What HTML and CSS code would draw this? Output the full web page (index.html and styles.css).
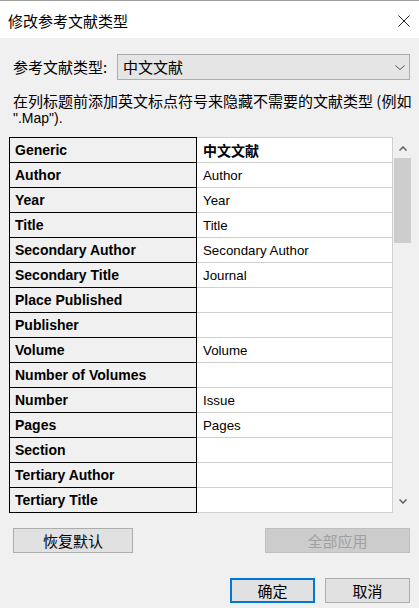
FILE: index.html
```html
<!DOCTYPE html>
<html lang="zh-CN">
<head>
<meta charset="utf-8">
<title>修改参考文献类型</title>
<link rel="stylesheet" href="styles.css">
</head>
<body>
<div class="window">
  <header class="titlebar">
    <span class="title">修改参考文献类型</span>
    <svg class="close" width="12" height="12" viewBox="0 0 12 12"><path d="M0.5 0.5L11.5 11.5M11.5 0.5L0.5 11.5" stroke="#222" stroke-width="1" fill="none"/></svg>
  </header>
  <main class="content">
    <div class="typerow">
      <span class="label">参考文献类型:</span>
      <div class="select">
        <span class="select-value">中文文献</span>
        <svg class="select-chev" width="10" height="5" viewBox="0 0 10 5"><path d="M0.5 0.5L5 4.5L9.5 0.5" stroke="#555" stroke-width="1" fill="none"/></svg>
      </div>
    </div>
    <div class="hint">
      <div class="hint-line">在列标题前添加英文标点符号来隐藏不需要的文献类型 (例如</div>
      <div class="hint-line latin">".Map").</div>
    </div>
    <div class="list">
      <div class="grid">
        <div class="k first">Generic</div><div class="v first bold">中文文献</div>
        <div class="k">Author</div><div class="v">Author</div>
        <div class="k">Year</div><div class="v">Year</div>
        <div class="k">Title</div><div class="v">Title</div>
        <div class="k">Secondary Author</div><div class="v">Secondary Author</div>
        <div class="k">Secondary Title</div><div class="v">Journal</div>
        <div class="k">Place Published</div><div class="v"></div>
        <div class="k">Publisher</div><div class="v"></div>
        <div class="k">Volume</div><div class="v">Volume</div>
        <div class="k">Number of Volumes</div><div class="v"></div>
        <div class="k">Number</div><div class="v">Issue</div>
        <div class="k">Pages</div><div class="v">Pages</div>
        <div class="k">Section</div><div class="v"></div>
        <div class="k">Tertiary Author</div><div class="v"></div>
        <div class="k">Tertiary Title</div><div class="v"></div>
      </div>
      <div class="scrollbar">
        <div class="sb-btn up"><svg width="8" height="5" viewBox="0 0 8 5"><path d="M0.5 4.5L4 1L7.5 4.5" stroke="#606060" stroke-width="1.5" fill="none"/></svg></div>
        <div class="thumb"></div>
        <div class="track"></div>
        <div class="sb-btn down"><svg width="8" height="5" viewBox="0 0 8 5"><path d="M0.5 0.5L4 4L7.5 0.5" stroke="#606060" stroke-width="1.5" fill="none"/></svg></div>
      </div>
    </div>
    <div class="actions-top">
      <button class="btn btn-reset">恢复默认</button>
      <button class="btn btn-apply" disabled>全部应用</button>
    </div>
    <div class="actions-bottom">
      <button class="btn btn-ok">确定</button>
      <button class="btn btn-cancel">取消</button>
    </div>
  </main>
</div>
</body>
</html>
```
FILE: styles.css
```css
* { box-sizing: border-box; }
html, body { margin: 0; padding: 0; }
body {
  width: 419px;
  height: 608px;
  background: #f0f0f0;
  font-family: "Noto Sans CJK SC", "Noto Sans", sans-serif;
  font-size: 15px;
  color: #000;
  overflow: hidden;
}
.window { width: 419px; height: 608px; }
.titlebar {
  height: 38px;
  background: #fff;
  border-top: 1px solid #a0a0a0;
  display: flex;
  align-items: center;
  justify-content: space-between;
  padding: 0 9px 0 8px;
}
.title { font-size: 15px; line-height: 20px; padding-top: 2px; }
.close { display: block; margin-top: 2px; }
.content { padding: 0 8px 0 9px; }
.typerow {
  margin-top: 16px;
  height: 26px;
  display: flex;
  align-items: center;
  padding-left: 4px;
}
.label { width: 104px; font-size: 15px; line-height: 20px; }
.select {
  width: 293px;
  height: 26px;
  background: #e5e5e5;
  border: 1px solid #adadad;
  display: flex;
  align-items: center;
  justify-content: space-between;
  padding: 0 4px 0 5px;
}
.select-value { font-size: 15px; line-height: 20px; }
.select-chev { display: block; }
.hint {
  margin-top: 12px;
  padding-left: 4px;
  white-space: nowrap;
}
.hint-line {
  font-size: 15px;
  line-height: 17px;
  height: 17px;
}
.hint-line.latin {
  font-family: "Liberation Sans", sans-serif;
  font-size: 14px;
  padding-top: 1px;
}
.list {
  margin-top: 11px;
  display: flex;
  height: 375px;
}
.grid {
  display: grid;
  grid-template-columns: 188px 196px;
  grid-template-rows: 26px;
  grid-auto-rows: 25px;
  font-family: "Liberation Sans", "Noto Sans CJK SC", sans-serif;
  font-size: 13.3px;
}
.grid > div {
  display: flex;
  align-items: center;
  white-space: nowrap;
  overflow: hidden;
  height: 25px;
}
.k {
  font-weight: bold;
  font-size: 14px;
  background: #f0f0f0;
  border-left: 1px solid #000;
  border-right: 1px solid #000;
  border-bottom: 1px solid #000;
  padding-left: 5px;
}
.v {
  background: #fff;
  border-right: 1px solid #d0d0d0;
  border-bottom: 1px solid #d0d0d0;
  padding-left: 6px;
}
.grid > .first { height: 26px; }
.k.first { border-top: 1px solid #000; }
.v.first { border-top: 1px solid #d0d0d0; }
.bold { font-weight: bold; font-size: 14px; }
.scrollbar {
  width: 18px;
  display: flex;
  flex-direction: column;
}
.sb-btn {
  display: flex;
  align-items: center;
  justify-content: center;
  padding-left: 2px;
}
.sb-btn svg { display: block; }
.sb-btn.up { height: 21px; padding-top: 1px; }
.sb-btn.down { height: 22px; }
.thumb {
  height: 85px;
  margin-left: 1px;
  width: 17px;
  background: #cdcdcd;
}
.track { flex: 1; }
.actions-top {
  margin-top: 16px;
  height: 25px;
  display: flex;
  justify-content: space-between;
  padding: 0 1px 0 4px;
}
.actions-bottom {
  margin-top: 25px;
  height: 25px;
  display: flex;
  justify-content: flex-end;
  gap: 10px;
  padding-right: 1px;
}
.btn {
  font-family: "Noto Sans CJK SC", sans-serif;
  font-size: 15px;
  line-height: 20px;
  height: 25px;
  padding: 0;
  margin: 0;
  background: #e1e1e1;
  border: 1px solid #adadad;
  color: #000;
  border-radius: 0;
}
.btn-reset { width: 120px; }
.btn-apply {
  width: 145px;
  background: #cccccc;
  border-color: #bfbfbf;
  color: #a0a0a0;
}
.btn-ok { width: 85px; border: 2px solid #0078d7; }
.btn-cancel { width: 85px; }
```
